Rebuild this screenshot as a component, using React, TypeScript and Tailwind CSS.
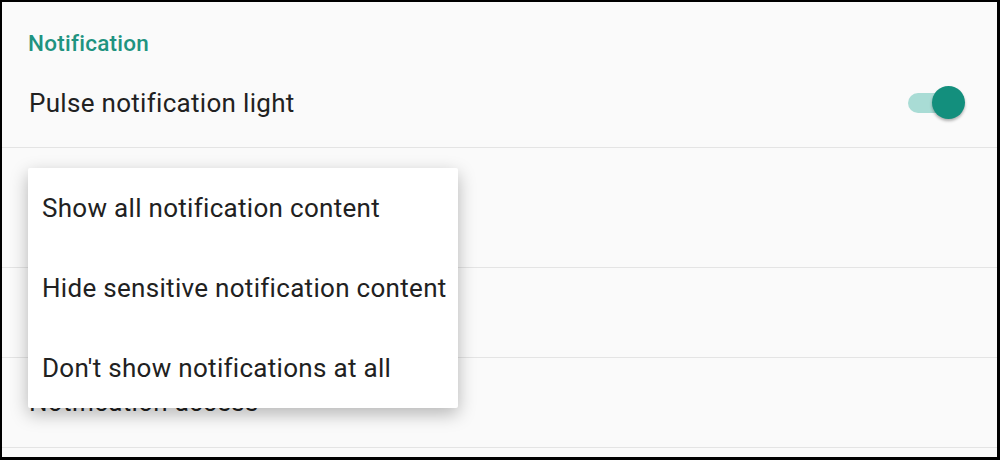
export default function App() {
  return (
    <div
      className="relative w-[1000px] h-[460px] overflow-hidden bg-black"
      style={{ fontFamily: 'Roboto, "Noto Sans", sans-serif' }}
    >
      <div className="absolute left-[2px] top-[2px] right-[3px] bottom-[3px] bg-[#fafafa]">
        <div className="h-[66px] pl-[26px] pt-[27px] text-[22.5px] font-medium tracking-[0.25px] text-[#1f9380] leading-[28px]">
          Notification
        </div>
        <div className="h-[80px] flex items-center justify-between pl-[27px] pr-[32px] pb-[9px] border-b border-[#e4e4e4]">
          <span className="text-[26px] tracking-[0.3px] text-[#212121]">Pulse notification light</span>
          <div className="relative w-[58px] h-[34px] flex items-center">
            <div className="ml-[1px] w-[50px] h-[20px] rounded-full bg-[#a9dcd5]"></div>
            <div className="absolute right-0 top-0 w-[33px] h-[33px] rounded-full bg-[#138f7d] shadow-[0_2px_3px_rgba(0,0,0,0.3)]"></div>
          </div>
        </div>
        <div className="h-[120px] border-b border-[#e4e4e4]"></div>
        <div className="h-[90px] border-b border-[#e4e4e4]"></div>
        <div className="h-[90px] flex items-center pl-[27px] border-b border-[#e4e4e4]">
          <span className="text-[26px] tracking-[0.3px] text-[#212121]">Notification access</span>
        </div>
      </div>

      <div className="absolute left-[28px] top-[168px] w-[430px] bg-white rounded-[2px] shadow-[0_6px_18px_rgba(0,0,0,0.28)]">
        {['Show all notification content', 'Hide sensitive notification content', "Don't show notifications at all"].map((t) => (
          <div key={t} className="h-[80px] flex items-center pl-[14px] whitespace-nowrap text-[26px] tracking-[0.3px] text-[#212121]">
            {t}
          </div>
        ))}
      </div>
    </div>
  );
}
